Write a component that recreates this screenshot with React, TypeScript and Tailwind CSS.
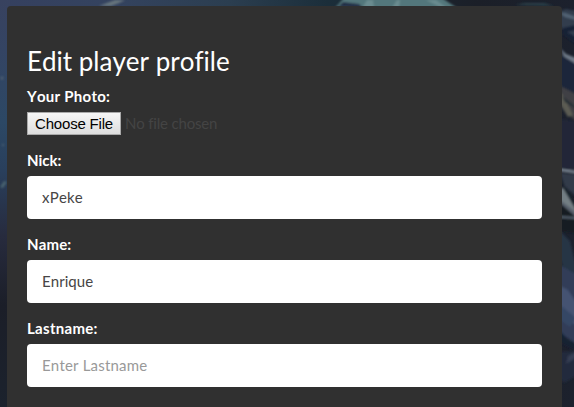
type FieldProps = { id: string; label: string; value?: string; placeholder?: string; labelClass?: string; inputClass?: string };

function Backdrop() {
  return (
    <svg className="absolute inset-0 h-full w-full" viewBox="0 0 574 407" aria-hidden="true">
      <defs>
        <linearGradient id="sky" x1="0" x2="1" y1="0" y2="0">
          <stop offset="0" stopColor="#35405f" />
          <stop offset="0.2" stopColor="#34435f" />
          <stop offset="0.4" stopColor="#2b3e50" />
          <stop offset="0.57" stopColor="#1b2e3a" />
          <stop offset="0.83" stopColor="#1b1f28" />
          <stop offset="1" stopColor="#1c212d" />
        </linearGradient>
        <linearGradient id="edge" x1="0" x2="0" y1="0" y2="1">
          <stop offset="0" stopColor="#38425f" />
          <stop offset="0.12" stopColor="#344463" />
          <stop offset="0.3" stopColor="#2c4865" />
          <stop offset="0.42" stopColor="#293f5c" />
          <stop offset="0.58" stopColor="#272b3e" />
          <stop offset="0.75" stopColor="#1b1e28" />
          <stop offset="1" stopColor="#1b222d" />
        </linearGradient>
        <filter id="soft"><feGaussianBlur stdDeviation="1" /></filter>
      </defs>
      <rect width="574" height="407" fill="url(#sky)" />
      <rect width="10" height="407" fill="url(#edge)" />
      <g filter="url(#soft)">
        <path d="M99 6 107 3 115 0 125 0 119 3 111 6Z" fill="#66747d" />
        <circle cx="2" cy="78" r="1.5" fill="#526275" />
        <circle cx="3" cy="145" r="1" fill="#4c6678" />
        <path d="M0 187 4 181 7 182 3 188Z" fill="#486370" />
        <path d="M335 8 344 -2 442 -2 457 8Z" fill="#53777b" />
        <path d="M338 7 343 2 359 4 363 8Z" fill="#242e46" />
        <path d="M363 7 367 0 373 0 374 8ZM392 8 397 0 400 0 399 8ZM426 0 442 8 447 8 436 0Z" fill="#6b8c90" />
        <path d="M515 5 525 3 544 3 554 6Z" fill="#29414a" />
        <path d="M560 11 566 9 576 11V38L565 34 560 25Z" fill="#303c4e" />
        <path d="M560 13 565 13 576 17V20L565 17Z" fill="#536474" />
        <path d="M563 28 576 25V30L567 32 576 37V44L562 34Z" fill="#192136" />
        <path d="M560 48 566 54 576 58V65L565 59Z" fill="#6f7a88" />
        <path d="M560 54 576 64V93L560 88Z" fill="#1e263a" />
        <path d="M560 86 576 94V121L566 113Z" fill="#3f4144" />
        <path d="M560 91 565 99 573 115 568 117 560 104Z" fill="#5c5c53" />
        <path d="M562 96 576 107V109L565 102Z" fill="#252d35" />
        <path d="M560 119 576 121V169L560 170Z" fill="#202638" />
        <path d="M560 169 576 171V173L560 171Z" fill="#8c99a5" />
        <path d="M560 173 576 174V196L565 187Z" fill="#303a48" />
        <path d="M560 188 567 189 576 206V214L560 204Z" fill="#737e83" />
        <path d="M560 187 563 188 576 210V205L567 188Z" fill="#172029" />
        <path d="M560 200 576 212V216L560 216Z" fill="#58606c" />
        <path d="M560 203 576 217V233L560 231Z" fill="#171c24" />
        <path d="M560 216 576 217V219L560 218Z" fill="#56636f" />
        <path d="M560 231 570 241 576 266V299L567 279 560 258Z" fill="#263545" />
        <path d="M560 265 576 274V344L560 333Z" fill="#303c58" />
        <path d="M560 286 568 290 576 302V325L560 315Z" fill="#455372" />
        <path d="M560 305 576 318 570 327 560 320Z" fill="#364765" />
        <path d="M560 331 568 340 576 343V351L562 344 560 340Z" fill="#192033" />
        <path d="M560 352 576 351V376L564 383 560 378Z" fill="#242b3d" />
        <path d="M568 356 576 352V358L566 364Z" fill="#343c53" />
      </g>
    </svg>
  );
}

function Field({ id, label, value, placeholder, labelClass = "", inputClass = "" }: FieldProps) {
  return (
    <div className="mb-[15px]">
      <label htmlFor={id} className={`mb-[5px] block h-[21px] font-bold text-white ${labelClass}`}>{label}</label>
      <input
        id={id}
        type="text"
        defaultValue={value}
        placeholder={placeholder}
        className={`block h-[43px] w-full rounded bg-white px-[15px] pt-[9px] pb-[11px] text-[#464545] outline-none placeholder:text-[#999999] ${inputClass}`}
      />
    </div>
  );
}

export default function App() {
  return (
    <main className="relative h-[407px] w-[574px] overflow-hidden pt-1.5 pr-3 pl-[7px] font-['Lato',sans-serif] text-[15px] leading-[21px] [font-kerning:none] [font-variant-ligatures:none]">
      <Backdrop />
      <section className="relative h-[420px] rounded bg-[#303030] px-5 pt-[41px]">
        <h1 className="mb-[10px] h-[29px] text-[26px] leading-[29px] font-normal text-white">Edit player profile</h1>
        <form>
          <div className="mb-[15px] h-[49px]">
            <label htmlFor="photo" className="mb-[5px] block h-[21px] font-bold tracking-[0.25px] text-white">Your Photo:</label>
            <div className="flex h-[23px] items-center gap-1">
              <button
                id="photo"
                type="button"
                className="h-[23px] w-[94px] border border-[#a9a9a9] bg-linear-to-b from-[#f6f6f6] to-[#dddddd] font-['Liberation_Sans',sans-serif] text-[15px] leading-[21px] tracking-[-0.2px] whitespace-nowrap text-black"
              >
                Choose File
              </button>
              <span className="tracking-[-0.18px] text-[#444444]">No file chosen</span>
            </div>
          </div>
          <Field id="nick" label="Nick:" value="xPeke" inputClass="tracking-[0.2px]" />
          <Field id="name" label="Name:" value="Enrique" labelClass="tracking-[0.15px]" inputClass="tracking-[0.05px]" />
          <Field
            id="lastname"
            label="Lastname:"
            placeholder="Enter Lastname"
            labelClass="tracking-[0.3px]"
            inputClass="tracking-[0.18px]"
          />
        </form>
      </section>
    </main>
  );
}
